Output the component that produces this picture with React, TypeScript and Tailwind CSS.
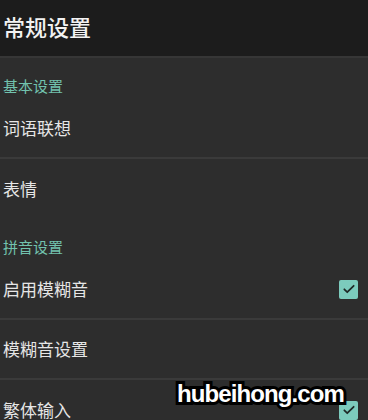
import React from 'react';

const font = "font-['Noto_Sans_CJK_SC','Noto_Sans',sans-serif]";

const Check: React.FC = () => (
  <div className="w-[19px] h-[19px] rounded-[2px] bg-[#7ccbbd] flex items-center justify-center">
    <svg width="14" height="14" viewBox="0 0 24 24" fill="none" stroke="#1f2a28" strokeWidth="3" strokeLinecap="round" strokeLinejoin="round">
      <path d="M4 12.5l5 5L20 6.5" />
    </svg>
  </div>
);

const Section: React.FC<{ label: string }> = ({ label }) => (
  <div className="px-[3px] pt-[17px] pb-[2px] text-[15px] leading-[22px] text-[#72c2ae]">{label}</div>
);

const Row: React.FC<{ label: string; checked?: boolean; divider?: boolean }> = ({ label, checked, divider }) => (
  <div className={`h-[60px] flex items-center justify-between pl-[3px] pr-[10px] ${divider ? 'border-b-2 border-[#3a3a3a]' : ''}`}>
    <span className="text-[17px] text-[#e6e6e6]">{label}</span>
    {checked && <Check />}
  </div>
);

const App: React.FC = () => {
  return (
    <div className={`relative w-[368px] h-[420px] overflow-hidden bg-[#2d2d2d] ${font}`}>
      <div className="h-[58px] bg-[#1c1c1c] border-b-2 border-[#363636] flex items-center px-[3px]">
        <span className="text-[22px] font-medium text-[#f2f2f2] -mt-[3px]">常规设置</span>
      </div>
      <Section label="基本设置" />
      <Row label="词语联想" divider />
      <Row label="表情" />
      <Section label="拼音设置" />
      <Row label="启用模糊音" checked divider />
      <Row label="模糊音设置" divider />
      <Row label="繁体输入" checked />
      <div className="absolute left-[177px] top-[380px] text-[24px] leading-[28px] font-black tracking-[-0.9px] text-white font-['Liberation_Sans',Arial,sans-serif] [-webkit-text-stroke:6px_#000] [paint-order:stroke_fill]">
        hubeihong.com
      </div>
    </div>
  );
};

export default App;
